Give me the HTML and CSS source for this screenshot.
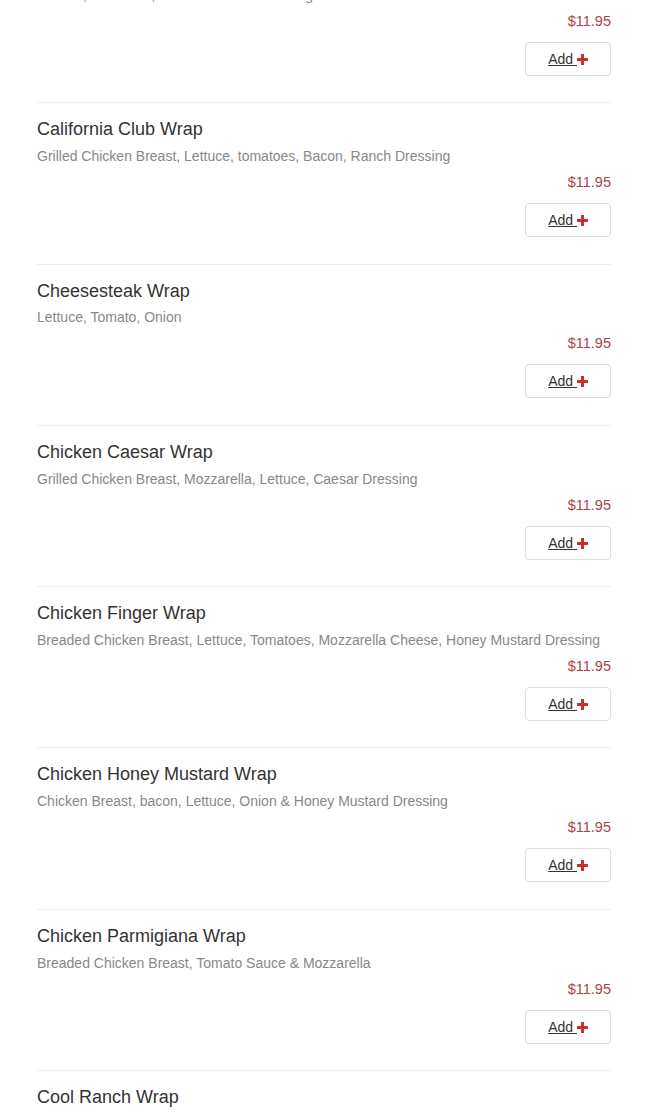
FILE: index.html
```html
<!DOCTYPE html>
<html lang="en">
<head>
    <meta charset="UTF-8">
    <meta name="viewport" content="width=device-width, initial-scale=1.0">
    <title>Wraps</title>
    <link rel="stylesheet" href="styles.css">
</head>
<body>
    <div class="menu">
        <div class="item">
            <h4 class="item-name">Buffalo Chicken Wrap</h4>
            <p class="item-desc">Lettuce, Tomatoes, Onion &amp; Ranch Dressing</p>
            <div class="item-price">$11.95</div>
            <div class="item-actions"><a class="btn-add" href="#">Add <svg class="plus" viewBox="0 0 11 11"><rect x="4" y="0" width="3" height="11"/><rect x="0" y="4" width="11" height="3"/></svg></a></div>
        </div>
        <div class="item">
            <h4 class="item-name">California Club Wrap</h4>
            <p class="item-desc">Grilled Chicken Breast, Lettuce, tomatoes, Bacon, Ranch Dressing</p>
            <div class="item-price">$11.95</div>
            <div class="item-actions"><a class="btn-add" href="#">Add <svg class="plus" viewBox="0 0 11 11"><rect x="4" y="0" width="3" height="11"/><rect x="0" y="4" width="11" height="3"/></svg></a></div>
        </div>
        <div class="item">
            <h4 class="item-name">Cheesesteak Wrap</h4>
            <p class="item-desc">Lettuce, Tomato, Onion</p>
            <div class="item-price">$11.95</div>
            <div class="item-actions"><a class="btn-add" href="#">Add <svg class="plus" viewBox="0 0 11 11"><rect x="4" y="0" width="3" height="11"/><rect x="0" y="4" width="11" height="3"/></svg></a></div>
        </div>
        <div class="item">
            <h4 class="item-name">Chicken Caesar Wrap</h4>
            <p class="item-desc">Grilled Chicken Breast, Mozzarella, Lettuce, Caesar Dressing</p>
            <div class="item-price">$11.95</div>
            <div class="item-actions"><a class="btn-add" href="#">Add <svg class="plus" viewBox="0 0 11 11"><rect x="4" y="0" width="3" height="11"/><rect x="0" y="4" width="11" height="3"/></svg></a></div>
        </div>
        <div class="item">
            <h4 class="item-name">Chicken Finger Wrap</h4>
            <p class="item-desc">Breaded Chicken Breast, Lettuce, Tomatoes, Mozzarella Cheese, Honey Mustard Dressing</p>
            <div class="item-price">$11.95</div>
            <div class="item-actions"><a class="btn-add" href="#">Add <svg class="plus" viewBox="0 0 11 11"><rect x="4" y="0" width="3" height="11"/><rect x="0" y="4" width="11" height="3"/></svg></a></div>
        </div>
        <div class="item">
            <h4 class="item-name">Chicken Honey Mustard Wrap</h4>
            <p class="item-desc">Chicken Breast, bacon, Lettuce, Onion &amp; Honey Mustard Dressing</p>
            <div class="item-price">$11.95</div>
            <div class="item-actions"><a class="btn-add" href="#">Add <svg class="plus" viewBox="0 0 11 11"><rect x="4" y="0" width="3" height="11"/><rect x="0" y="4" width="11" height="3"/></svg></a></div>
        </div>
        <div class="item">
            <h4 class="item-name">Chicken Parmigiana Wrap</h4>
            <p class="item-desc">Breaded Chicken Breast, Tomato Sauce &amp; Mozzarella</p>
            <div class="item-price">$11.95</div>
            <div class="item-actions"><a class="btn-add" href="#">Add <svg class="plus" viewBox="0 0 11 11"><rect x="4" y="0" width="3" height="11"/><rect x="0" y="4" width="11" height="3"/></svg></a></div>
        </div>
        <div class="item">
            <h4 class="item-name">Cool Ranch Wrap</h4>
            <p class="item-desc">Grilled Chicken Breast, Lettuce, Tomatoes, Cheddar Cheese, Cool Ranch Dressing</p>
            <div class="item-price">$11.95</div>
            <div class="item-actions"><a class="btn-add" href="#">Add <svg class="plus" viewBox="0 0 11 11"><rect x="4" y="0" width="3" height="11"/><rect x="0" y="4" width="11" height="3"/></svg></a></div>
        </div>
    </div>
</body>
</html>
```

FILE: styles.css
```css
body {
    font-family: "Liberation Sans", Arial, sans-serif;
    font-size: 14px;
    line-height: 20px;
    margin: 0;
    padding: 0;
    background-color: #fff;
    color: #333;
}

/* list is scrolled a little, first item sits above the fold */
.menu {
    width: 574px;
    margin: -59px 0 0 37px;
}

.item {
    border-top: 1px solid #eee;
    padding: 17px 0 26.5px;
}

.item-name {
    font-size: 18px;
    font-weight: normal;
    line-height: 1.1;
    margin: 0 0 6px;
    color: #333;
}

.item-desc {
    margin: 0;
    color: #888;
}

.item-price {
    margin-top: 6px;
    text-align: right;
    font-size: 14.5px;
    color: #a94442;
}

.item-actions {
    margin-top: 11px;
    text-align: right;
}

.btn-add {
    display: inline-block;
    padding: 6px 22px;
    border: 1px solid #ddd;
    border-radius: 4px;
    color: #333;
    text-decoration: underline;
    background-color: #fff;
}

.plus {
    width: 11px;
    height: 11px;
    vertical-align: -1px;
    fill: #c9302c;
}
```
